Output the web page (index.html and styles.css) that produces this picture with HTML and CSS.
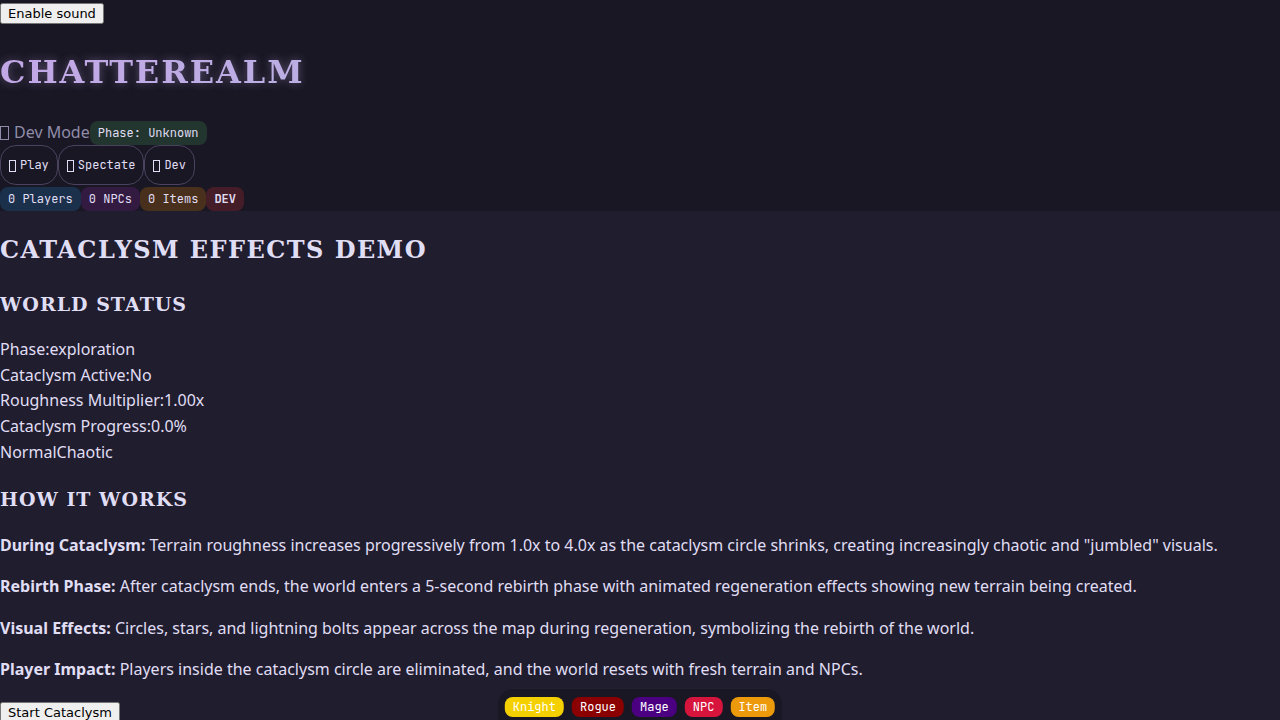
FILE: index.html
```html
<!DOCTYPE html>
<html lang="en">
<head>
<meta charset="utf-8">
<title>Chatterealm</title>
<link rel="stylesheet" href="styles.css">
</head>
<body>
<header class="header">
  <div class="sound"><button type="button" class="native-button">Enable sound</button></div>
  <h1 class="logo">CHATTEREALM</h1>
  <div class="row"><span class="mode"><i class="glyph"></i>Dev Mode</span><span class="badge phase">Phase: Unknown</span></div>
  <nav class="row"><button type="button" class="tab"><i class="glyph"></i>Play</button><button type="button" class="tab"><i class="glyph"></i>Spectate</button><button type="button" class="tab"><i class="glyph"></i>Dev</button></nav>
  <div class="row counts"><span class="badge players">0 Players</span><span class="badge npcs">0 NPCs</span><span class="badge items">0 Items</span><span class="badge dev">DEV</span></div>
</header>
<main class="main">
  <h2 class="title">CATACLYSM EFFECTS DEMO</h2>
  <h3 class="subtitle">WORLD STATUS</h3>
  <div class="status">
    <div><span>Phase:</span><span>exploration</span></div>
    <div><span>Cataclysm Active:</span><span>No</span></div>
    <div><span>Roughness Multiplier:</span><span>1.00x</span></div>
    <div><span>Cataclysm Progress:</span><span>0.0%</span></div>
    <div><span>Normal</span><span>Chaotic</span></div>
  </div>
  <h3 class="subtitle">HOW IT WORKS</h3>
  <p class="note"><strong>During Cataclysm:</strong> Terrain roughness increases progressively from 1.0x to 4.0x as the cataclysm circle shrinks, creating increasingly chaotic and "jumbled" visuals.</p>
  <p class="note"><strong>Rebirth Phase:</strong> After cataclysm ends, the world enters a 5-second rebirth phase with animated regeneration effects showing new terrain being created.</p>
  <p class="note"><strong>Visual Effects:</strong> Circles, stars, and lightning bolts appear across the map during regeneration, symbolizing the rebirth of the world.</p>
  <p class="note"><strong>Player Impact:</strong> Players inside the cataclysm circle are eliminated, and the world resets with fresh terrain and NPCs.</p>
  <button type="button" class="native-button">Start Cataclysm</button>
</main>
<footer class="legend">
  <span class="chip knight">Knight</span><span class="chip rogue">Rogue</span><span class="chip mage">Mage</span><span class="chip npc">NPC</span><span class="chip item">Item</span>
</footer>
</body>
</html>
```
FILE: styles.css
```css
* { box-sizing: border-box; }
body {
  margin: 0;
  height: 100vh;
  overflow: hidden;
  background: #1f1d2e;
  color: #e0def4;
  font: 16px/1.6 "Noto Sans", sans-serif;
}
.header { background: #191724; }
.native-button { font-family: "DejaVu Sans", sans-serif; font-size: 13px; }
.logo, .title {
  font-family: "DejaVu Serif", serif;
  font-weight: 700;
  letter-spacing: 0.06em;
}
.logo {
  margin: 21px 0 22px;
  font-size: 32px;
  color: transparent;
  background: linear-gradient(135deg, #c4a7e7, #9ccfd8);
  background-clip: text;
  text-shadow: 0 0 10px rgba(196, 167, 231, 0.4);
}
.row { display: flex; align-items: center; }
.counts { margin-top: 2px; }
.mode { color: #908caa; }
.glyph {
  display: inline-block;
  width: 7px;
  height: 12px;
  margin-right: 4px;
  border: 1px solid currentColor;
  vertical-align: -3px;
}
.mode .glyph { width: 9px; height: 14px; margin-right: 5px; vertical-align: -2px; }
.badge, .tab, .chip { font: 12px/16px "JetBrains Mono", "Roboto Mono", monospace; }
.badge { padding: 4px 8px; border-radius: 8px; }
.phase { background: #23352f; }
.players { background: #1a304b; }
.npcs { background: #321a40; }
.items { background: #48301c; }
.badge.dev { background: #451d28; font-weight: 700; }
.tab {
  height: 40px;
  padding: 8px;
  color: #e0def4;
  background: #191724;
  border: 1px solid #4a425e;
  border-radius: 16px;
}
.title { margin: 0 0 19px; padding-top: 20px; font-size: 24px; }
.subtitle {
  margin: 19px 0 18px;
  font: 700 19px/1.6 "DejaVu Serif", serif;
  letter-spacing: 1px;
}
.note { margin: 16px 0; }
.legend {
  position: fixed;
  bottom: 0;
  left: 50%;
  transform: translateX(-50%);
  display: flex;
  gap: 8px;
  padding: 8px 7px 3px;
  background: #191724;
  border: 1px solid #211f30;
  border-bottom: 0;
  border-radius: 16px 16px 0 0;
}
.chip { padding: 2px 8px; border-radius: 8px; color: #fff; }
.knight { background: #f5d000; }
.rogue { background: #8b0000; }
.mage { background: #4b0082; }
.npc { background: #d6143c; }
.item { background: #ec9a0c; }
```
